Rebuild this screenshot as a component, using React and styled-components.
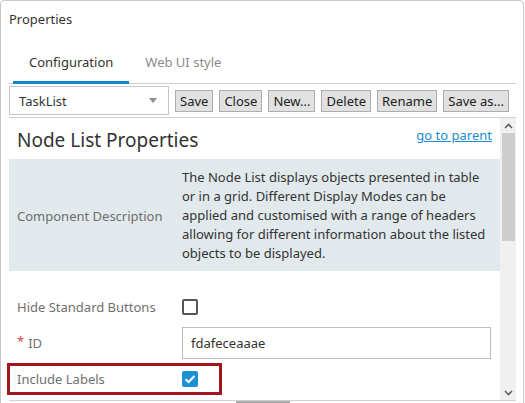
import React from "react";
import styled, { createGlobalStyle } from "styled-components";

const GlobalStyle = createGlobalStyle`
  html, body { margin: 0; padding: 0; background: #fff; }
  body { font-family: "Noto Sans", "Open Sans", sans-serif; font-size: 13px; color: #333; }
  * { box-sizing: border-box; }
`;

const Panel = styled.div`
  width: 524px;
  height: 420px;
  border: 1px solid #c8c8c8;
  border-radius: 4px;
  background: #fff;
  position: relative;
`;

const Title = styled.div`
  height: 37px;
  line-height: 37px;
  padding-left: 8px;
  font-size: 13px;
  color: #333;
`;

const TabBar = styled.div`
  display: flex;
  margin: 0 7px 0 8px;
  padding-left: 4px;
  border-bottom: 1px solid #cfcfcf;
`;

const Tab = styled.div`
  padding: 14px 16px 9px;
  line-height: 20px;
  font-size: 13px;
  margin-bottom: -1px;
  border-bottom: 3px solid ${(p) => (p.$active ? "#1287d0" : "transparent")};
  color: ${(p) => (p.$active ? "#333" : "#8a8a8a")};
`;

const Toolbar = styled.div`
  display: flex;
  align-items: center;
  gap: 6px;
  margin: 0 7px 0 8px;
  padding: 2px 0 2px;
`;

const Select = styled.div`
  width: 160px;
  height: 29px;
  border: 1px solid #c6c6c6;
  display: flex;
  align-items: center;
  justify-content: space-between;
  padding: 0 11px 0 9px;
  color: #333;
`;

const Caret = styled.span`
  width: 0;
  height: 0;
  border-left: 4.5px solid transparent;
  border-right: 4.5px solid transparent;
  border-top: 5px solid #8c8c8c;
`;

const Button = styled.button`
  height: 22px;
  padding: 0 4px;
  font-family: inherit;
  font-size: 13px;
  color: #222;
  background: #e1e1e1;
  border: 1px solid #adadad;
  border-radius: 0;
  line-height: 18px;
  white-space: nowrap;
  flex-shrink: 0;
`;

const ContentArea = styled.div`
  display: flex;
  margin: 0 7px 0 8px;
  height: 284px;
  border-top: 1px solid #cfcfcf;
  border-bottom: 1px solid #d2d2d2;
`;

const Scroller = styled.div`
  flex: 1;
  min-width: 0;
`;

const HeadingRow = styled.div`
  display: flex;
  justify-content: space-between;
  align-items: flex-start;
  height: 41px;
`;

const Heading = styled.h2`
  margin: 0;
  padding: 9px 0 0 8px;
  font-size: 19px;
  line-height: 26px;
  font-weight: 400;
  color: #333;
`;

const ParentLink = styled.a`
  margin-top: 8px;
  margin-right: 8px;
  line-height: 18px;
  color: #1b8bd0;
  text-decoration: underline;
  cursor: pointer;
`;

const Description = styled.div`
  display: grid;
  grid-template-columns: 165px 1fr;
  align-items: center;
  background: #e1e9ec;
  padding: 9px 8px 8px;
  line-height: 19px;
`;

const DescLabel = styled.div`
  color: #6e6e6e;
  padding-top: 2px;
`;

const DescText = styled.div`
  color: #333;
  white-space: nowrap;
`;

const Form = styled.div`
  padding-top: 20px;
  display: flex;
  flex-direction: column;
  gap: 4px;
`;

const Row = styled.div`
  position: relative;
  display: grid;
  grid-template-columns: 165px 1fr;
  align-items: center;
  height: 32px;
  padding-left: 8px;
`;

const Label = styled.div`
  color: #707070;
  display: flex;
  align-items: center;
  gap: 4px;
`;

const Required = styled.span`
  color: #d9463e;
  font-size: 13px;
  position: relative;
  top: -2px;
`;

const Check = styled.span`
  width: 16px;
  height: 16px;
  border-radius: 2px;
  display: inline-flex;
  align-items: center;
  justify-content: center;
  border: ${(p) => (p.$checked ? "none" : "2px solid #555")};
  background: ${(p) => (p.$checked ? "#1d8fd5" : "#fff")};
`;

const CheckCell = styled.div`
  display: flex;
  align-items: center;
`;

const Input = styled.div`
  width: 309px;
  height: 32px;
  border: 1px solid #bdbdbd;
  padding-left: 8px;
  display: flex;
  align-items: center;
  color: #333;
`;

const Highlight = styled.div`
  position: absolute;
  left: -2px;
  top: 0;
  width: 215px;
  height: 32px;
  border: 3px solid #a3151f;
  pointer-events: none;
`;

const ScrollBar = styled.div`
  width: 16px;
  background: #f0f0f0;
  display: flex;
  flex-direction: column;
  align-items: center;
`;

const Arrow = styled.div`
  height: 15px;
  display: flex;
  align-items: center;
  justify-content: center;
  width: 100%;
`;

const Thumb = styled.div`
  width: 13px;
  height: 108px;
  background: #cdcdcd;
`;

const Spacer = styled.div`
  flex: 1;
`;

const HScroll = styled.div`
  margin: 0 7px 0 8px;
  height: 3px;
`;

const HThumb = styled.div`
  margin-left: 227px;
  width: 54px;
  height: 3px;
  background: #ababab;
`;

const Chevron = ({ up }) => (
  <svg width="9" height="6" viewBox="0 0 9 6">
    <path
      d={up ? "M1 5 L4.5 1.5 L8 5" : "M1 1 L4.5 4.5 L8 1"}
      fill="none"
      stroke="#606060"
      strokeWidth="1.6"
    />
  </svg>
);

const Tick = () => (
  <svg width="12" height="10" viewBox="0 0 12 10">
    <path d="M1.5 5.2 L4.6 8 L10.5 2" fill="none" stroke="#fff" strokeWidth="2" />
  </svg>
);

export default function App() {
  return (
    <>
      <GlobalStyle />
      <Panel>
        <Title>Properties</Title>
        <TabBar>
          <Tab $active>Configuration</Tab>
          <Tab>Web UI style</Tab>
        </TabBar>
        <Toolbar>
          <Select>
            <span>TaskList</span>
            <Caret />
          </Select>
          <Button>Save</Button>
          <Button>Close</Button>
          <Button>New...</Button>
          <Button>Delete</Button>
          <Button>Rename</Button>
          <Button>Save as...</Button>
        </Toolbar>
        <ContentArea>
          <Scroller>
            <HeadingRow>
              <Heading>Node List Properties</Heading>
              <ParentLink>go to parent</ParentLink>
            </HeadingRow>
            <Description>
              <DescLabel>Component Description</DescLabel>
              <DescText>
                The Node List displays objects presented in table
                <br />
                or in a grid. Different Display Modes can be
                <br />
                applied and customised with a range of headers
                <br />
                allowing for different information about the listed
                <br />
                objects to be displayed.
              </DescText>
            </Description>
            <Form>
              <Row>
                <Label>Hide Standard Buttons</Label>
                <CheckCell>
                  <Check />
                </CheckCell>
              </Row>
              <Row>
                <Label>
                  <Required>*</Required>ID
                </Label>
                <Input>fdafeceaaae</Input>
              </Row>
              <Row>
                <Label>Include Labels</Label>
                <CheckCell>
                  <Check $checked>
                    <Tick />
                  </Check>
                </CheckCell>
                <Highlight />
              </Row>
            </Form>
          </Scroller>
          <ScrollBar>
            <Arrow>
              <Chevron up />
            </Arrow>
            <Thumb />
            <Spacer />
            <Arrow>
              <Chevron />
            </Arrow>
          </ScrollBar>
        </ContentArea>
        <HScroll>
          <HThumb />
        </HScroll>
      </Panel>
    </>
  );
}
